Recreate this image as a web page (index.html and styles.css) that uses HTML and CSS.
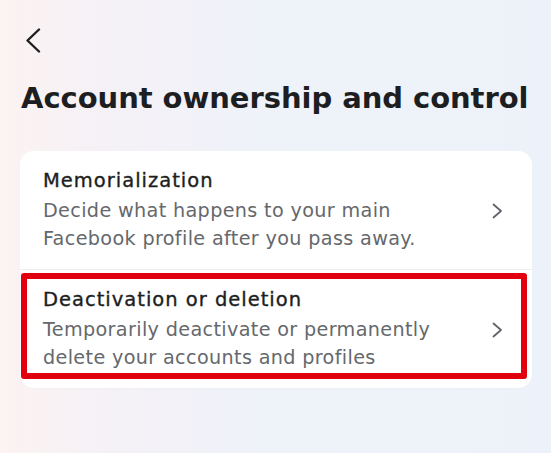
FILE: index.html
```html
<!DOCTYPE html>
<html lang="en">
<head>
<meta charset="utf-8">
<title>Account ownership and control</title>
<link rel="stylesheet" href="styles.css">
</head>
<body>
<div class="page">
  <button class="back" aria-label="Back">
    <svg width="17" height="25" viewBox="0 0 17 25"><polyline points="15,1.5 3.5,12.5 15,23.5" fill="none" stroke="#1c1e21" stroke-width="2.4" stroke-linecap="round" stroke-linejoin="round"/></svg>
  </button>
  <h1 class="title">Account ownership and control</h1>
  <div class="card">
    <div class="row">
      <div class="row-text">
        <div class="row-title">Memorialization</div>
        <div class="row-sub">Decide what happens to your main<br>Facebook profile after you pass away.</div>
      </div>
      <svg class="chev" width="12" height="16" viewBox="0 0 12 16"><polyline points="2.5,1.5 10,8 2.5,14.5" fill="none" stroke="#606368" stroke-width="1.8" stroke-linecap="round" stroke-linejoin="round"/></svg>
    </div>
    <div class="divider"></div>
    <div class="row row-highlight">
      <div class="row-text">
        <div class="row-title">Deactivation or deletion</div>
        <div class="row-sub">Temporarily deactivate or permanently<br>delete your accounts and profiles</div>
      </div>
      <svg class="chev" width="12" height="16" viewBox="0 0 12 16"><polyline points="2.5,1.5 10,8 2.5,14.5" fill="none" stroke="#606368" stroke-width="1.8" stroke-linecap="round" stroke-linejoin="round"/></svg>
    </div>
  </div>
</div>
</body>
</html>
```

FILE: styles.css
```css
html, body {
  margin: 0;
  padding: 0;
  height: 100%;
}
body {
  background: linear-gradient(to right, #fcf3f2 0%, #f5f1f6 18%, #eff2f9 45%, #edf2fa 100%);
  font-family: "DejaVu Sans", sans-serif;
  color: #1c1e21;
}
.page {
  padding: 28px 19px 0 20px;
  display: flex;
  flex-direction: column;
}
.back {
  align-self: flex-start;
  border: 0;
  background: none;
  padding: 0;
  margin-left: 4px;
  height: 25px;
  display: flex;
}
.title {
  margin: 27px 0 0 1px;
  font-size: 29px;
  line-height: 36px;
  font-weight: 700;
  letter-spacing: -0.05px;
  color: #1c1e21;
}
.card {
  margin-top: 35px;
  background: #ffffff;
  border-radius: 14px;
  display: flex;
  flex-direction: column;
  box-shadow: 0 1px 2px rgba(0,0,0,0.02);
}
.row {
  display: flex;
  align-items: center;
  padding: 17px 29px 16px 23px;
  position: relative;
}
.row-text {
  flex: 1;
}
.row-title {
  font-size: 19.5px;
  line-height: 26px;
  font-weight: 400;
  letter-spacing: 1px;
  color: #1c1e21;
  -webkit-text-stroke: 0.35px #1c1e21;
}
.row-sub {
  margin-top: 3px;
  font-size: 19.2px;
  line-height: 28px;
  letter-spacing: 0.35px;
  color: #65686c;
}
.divider {
  height: 1px;
  background: #eceef1;
}
.row-highlight::after {
  content: "";
  position: absolute;
  left: 1px;
  top: 3px;
  right: 5px;
  bottom: 9px;
  border: 6px solid #e1000f;
  border-radius: 3px;
  pointer-events: none;
}
```
